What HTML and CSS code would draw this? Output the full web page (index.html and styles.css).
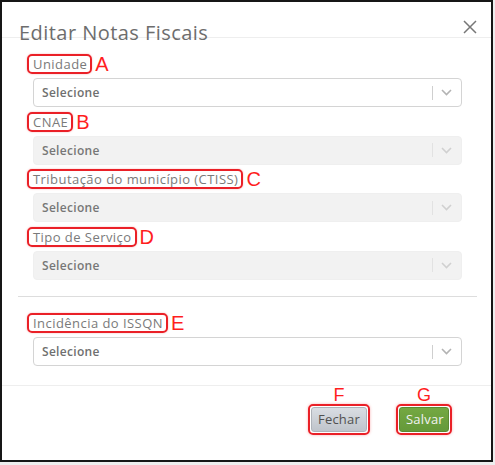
FILE: index.html
```html
<!DOCTYPE html>
<html lang="pt-BR">
<head>
<meta charset="utf-8">
<title>Editar Notas Fiscais</title>
<link rel="stylesheet" href="styles.css">
</head>
<body>
<div class="frame">
  <div class="header">
    <h1 class="title">Editar Notas Fiscais</h1>
    <button class="close" aria-label="Fechar">
      <svg width="14" height="14" viewBox="0 0 14 14"><path d="M1 1 L13 13 M13 1 L1 13" stroke="#777" stroke-width="1.5" fill="none"/></svg>
    </button>
  </div>

  <div class="section">
    <div class="field">
      <div class="label-row"><span class="label">Unidade</span><span class="mark">A</span></div>
      <div class="select">
        <span class="value">Selecione</span>
        <span class="sep"></span>
        <svg class="chev" width="11" height="7" viewBox="0 0 11 7"><path d="M1 1 L5.5 5.5 L10 1" stroke="#b3b3b3" stroke-width="1.6" fill="none"/></svg>
      </div>
    </div>
    <div class="field">
      <div class="label-row"><span class="label">CNAE</span><span class="mark">B</span></div>
      <div class="select disabled">
        <span class="value">Selecione</span>
        <span class="sep"></span>
        <svg class="chev" width="11" height="7" viewBox="0 0 11 7"><path d="M1 1 L5.5 5.5 L10 1" stroke="#d0d0d0" stroke-width="1.6" fill="none"/></svg>
      </div>
    </div>
    <div class="field">
      <div class="label-row"><span class="label">Tributação do município (CTISS)</span><span class="mark">C</span></div>
      <div class="select disabled">
        <span class="value">Selecione</span>
        <span class="sep"></span>
        <svg class="chev" width="11" height="7" viewBox="0 0 11 7"><path d="M1 1 L5.5 5.5 L10 1" stroke="#d0d0d0" stroke-width="1.6" fill="none"/></svg>
      </div>
    </div>
    <div class="field last">
      <div class="label-row"><span class="label">Tipo de Serviço</span><span class="mark">D</span></div>
      <div class="select disabled">
        <span class="value">Selecione</span>
        <span class="sep"></span>
        <svg class="chev" width="11" height="7" viewBox="0 0 11 7"><path d="M1 1 L5.5 5.5 L10 1" stroke="#d0d0d0" stroke-width="1.6" fill="none"/></svg>
      </div>
    </div>
  </div>

  <hr class="divider">

  <div class="section bottom">
    <div class="field last">
      <div class="label-row"><span class="label">Incidência do ISSQN</span><span class="mark">E</span></div>
      <div class="select">
        <span class="value">Selecione</span>
        <span class="sep"></span>
        <svg class="chev" width="11" height="7" viewBox="0 0 11 7"><path d="M1 1 L5.5 5.5 L10 1" stroke="#b3b3b3" stroke-width="1.6" fill="none"/></svg>
      </div>
    </div>
  </div>

  <div class="footer">
    <div class="action">
      <span class="mark small">F</span>
      <span class="outline"><button class="btn btn-close">Fechar</button></span>
    </div>
    <div class="action">
      <span class="mark small">G</span>
      <span class="outline"><button class="btn btn-save">Salvar</button></span>
    </div>
  </div>
</div>
</body>
</html>
```

FILE: styles.css
```css
* { box-sizing: border-box; }

html, body {
  margin: 0;
  padding: 0;
}

body {
  background: #eeeeee;
  font-family: "Open Sans", "Noto Sans", sans-serif;
  width: 495px;
  height: 465px;
}

.frame {
  width: 493px;
  height: 462px;
  border: 2px solid #161616;
  background: #ffffff;
}

.header {
  height: 36px;
  border-bottom: 1px solid #eeeeee;
  display: flex;
  justify-content: space-between;
  align-items: flex-start;
  padding: 0 14px 0 17px;
}

.title {
  margin: 0;
  padding-top: 19px;
  font-size: 20px;
  line-height: 24px;
  font-weight: 400;
  color: #6d6d6d;
  letter-spacing: 0.45px;
}

.close {
  margin-top: 18px;
  padding: 0;
  border: 0;
  background: none;
  width: 14px;
  height: 14px;
  display: block;
}
.close svg { display: block; }

.section {
  padding: 16px 29px 0 25px;
}

.section.bottom {
  padding-top: 0;
  padding-bottom: 19px;
  border-bottom: 1px solid #eeeeee;
}

.field {
  margin-bottom: 4.5px;
}
.field.last { margin-bottom: 0; }

.label-row {
  display: flex;
  align-items: center;
  height: 20px;
  margin-bottom: 4px;
}

.label {
  display: inline-block;
  border: 2px solid #ea2027;
  border-radius: 5px;
  padding: 0 3px 0 4px;
  height: 20px;
  line-height: 16px;
  font-size: 13px;
  letter-spacing: 0.45px;
  color: #7a7a7a;
  box-shadow: 0 0 2px rgba(234, 32, 39, 0.35);
}

.mark {
  font-family: "Liberation Sans", Arial, sans-serif;
  color: #ff1e1e;
  font-size: 20px;
  line-height: 20px;
  margin-left: 3px;
}

.select {
  margin-left: 6px;
  height: 29px;
  border: 1px solid #d4d4d4;
  border-radius: 4px;
  background: #ffffff;
  display: flex;
  align-items: center;
  padding: 0 9px 0 8px;
}

.select.disabled {
  background: #f2f2f2;
  border-color: #efefef;
}

.value {
  flex: 1;
  font-size: 12px;
  font-weight: 600;
  letter-spacing: 0.3px;
  color: #6f6f6f;
}

.select.disabled .value { color: #777777; }

.sep {
  width: 1px;
  height: 14px;
  background: #cfcfcf;
  margin-right: 8px;
}
.select.disabled .sep { background: #e2e2e2; }

.chev { display: block; }

.divider {
  margin: 16.5px 14px 16px 16px;
  border: 0;
  border-top: 1px solid #dddddd;
  height: 0;
}

.footer {
  display: flex;
  justify-content: flex-end;
  gap: 26px;
  padding: 1px 39px 0 0;
}

.action {
  display: flex;
  flex-direction: column;
  align-items: center;
}

.mark.small {
  font-size: 18px;
  line-height: 17px;
  margin-left: 0;
  height: 17px;
}

.outline {
  display: block;
  border: 2px solid #ea2027;
  border-radius: 5px;
  padding: 1px;
  box-shadow: 0 0 3px rgba(234, 32, 39, 0.35);
}

.btn {
  display: block;
  height: 25px;
  border-radius: 3px;
  font-family: "Open Sans", "Noto Sans", sans-serif;
  font-size: 13px;
  line-height: 23px;
  padding: 0 6px;
  margin: 0;
  letter-spacing: 0.2px;
}

.btn-close {
  width: 56px;
  background: linear-gradient(#d9dde3, #bfc4cb);
  border: 1px solid #aeb3ba;
  color: #505050;
}

.btn-save {
  width: 50px;
  background: linear-gradient(#74a842, #65993a);
  border: 1px solid #5a8a32;
  color: #f2f2f2;
}
```
